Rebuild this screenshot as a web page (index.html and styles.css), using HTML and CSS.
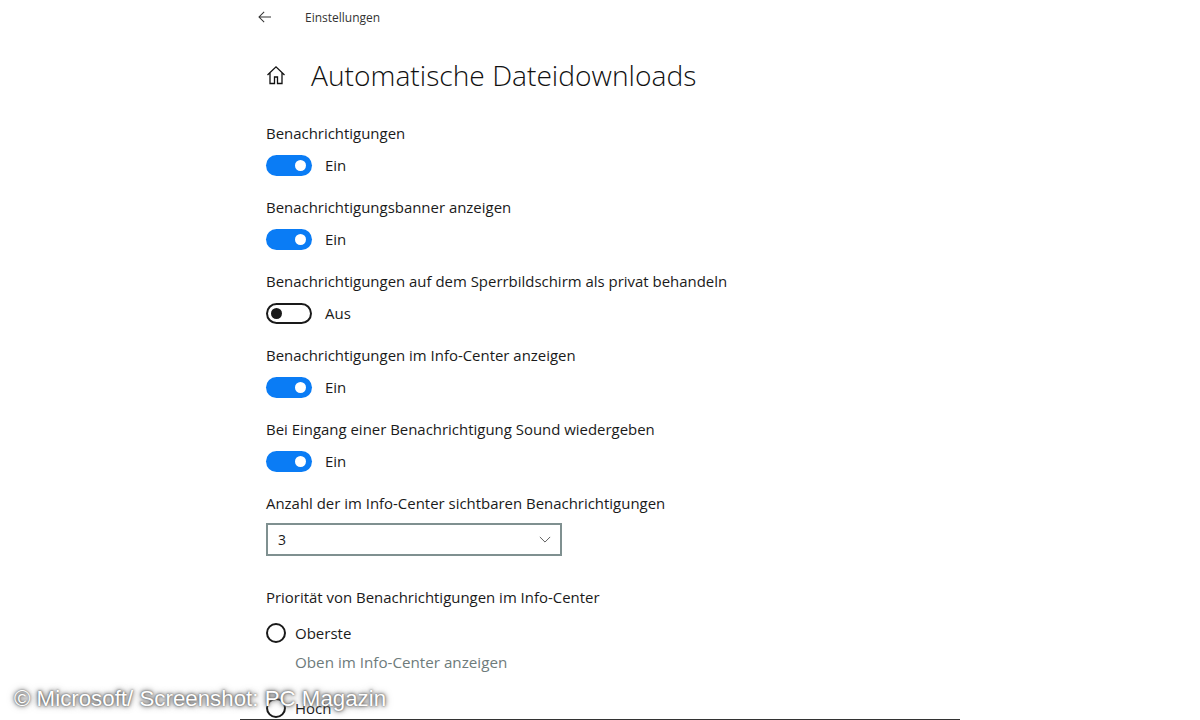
FILE: index.html
```html
<!DOCTYPE html>
<html lang="de">
<head>
<meta charset="utf-8">
<title>Einstellungen</title>
<link rel="stylesheet" href="styles.css">
</head>
<body>
<main class="panel">
  <header class="topbar">
    <svg class="back" viewBox="0 0 16 14" width="14" height="12"><path d="M7 1 1 7l6 6M1 7h14" fill="none" stroke="#333" stroke-width="1.200"/></svg>
    <span class="apptitle">Einstellungen</span>
  </header>
  <div class="titlerow">
    <svg class="home" viewBox="0 0 20 20" width="20" height="20"><path d="M1.500 10 10 1.800l8.500 8.200M4 8v10.500h4.500v-6.500h3v6.500H16V8" fill="none" stroke="#111" stroke-width="1.300"/></svg>
    <h1>Automatische Dateidownloads</h1>
  </div>
  <section class="setting">
    <div class="label">Benachrichtigungen</div>
    <div class="togglerow"><span class="toggle on"><i></i></span><span>Ein</span></div>
  </section>
  <section class="setting">
    <div class="label">Benachrichtigungsbanner anzeigen</div>
    <div class="togglerow"><span class="toggle on"><i></i></span><span>Ein</span></div>
  </section>
  <section class="setting">
    <div class="label">Benachrichtigungen auf dem Sperrbildschirm als privat behandeln</div>
    <div class="togglerow"><span class="toggle off"><i></i></span><span>Aus</span></div>
  </section>
  <section class="setting">
    <div class="label">Benachrichtigungen im Info-Center anzeigen</div>
    <div class="togglerow"><span class="toggle on"><i></i></span><span>Ein</span></div>
  </section>
  <section class="setting">
    <div class="label">Bei Eingang einer Benachrichtigung Sound wiedergeben</div>
    <div class="togglerow"><span class="toggle on"><i></i></span><span>Ein</span></div>
  </section>
  <section class="setting">
    <div class="label">Anzahl der im Info-Center sichtbaren Benachrichtigungen</div>
    <div class="select"><span>3</span><svg viewBox="0 0 14 8" width="12" height="7"><path d="M1 1l6 6 6-6" fill="none" stroke="#555" stroke-width="1.100"/></svg></div>
  </section>
  <section class="priority">
    <div class="label">Priorität von Benachrichtigungen im Info-Center</div>
    <div class="radio"><span class="circle"></span><span>Oberste</span></div>
    <div class="hint">Oben im Info-Center anzeigen</div>
    <div class="radio"><span class="circle"></span><span>Hoch</span></div>
  </section>
</main>
<div class="watermark">© Microsoft/ Screenshot: PC Magazin</div>
</body>
</html>
```
FILE: styles.css
```css
* { box-sizing: border-box; }
html, body { margin: 0; height: 720px; overflow: hidden; background: #fff; }
body { font-family: "Open Sans", "Noto Sans", sans-serif; color: #1a1a1a; font-size: 15px; }
.panel { width: 720px; height: 720px; margin: 0 auto; padding: 0 26px; border-bottom: 1px solid #333; overflow: hidden; }
.topbar { display: flex; align-items: center; height: 34px; font-size: 12px; color: #333; }
.back { margin-left: -8px; }
.apptitle { margin-left: 33px; }
.titlerow { display: flex; align-items: center; height: 44px; margin-top: 19px; }
.home { flex: none; }
h1 { margin: 0 0 0 25px; font-size: 28.2px; font-weight: 300; color: #111; line-height: 44px; }
.setting { height: 74px; }
.titlerow + .setting { margin-top: 25px; }
.label { height: 23px; line-height: 23px; font-size: 14.950px; }
.togglerow { display: flex; align-items: center; gap: 13px; height: 22px; margin-top: 9px; font-size: 15px; }
.toggle { display: flex; align-items: center; width: 46px; height: 21px; border-radius: 11px; padding: 0 6px; }
.toggle i { display: block; width: 11px; height: 11px; border-radius: 50%; }
.toggle.on { background: #0a7cf5; justify-content: flex-end; }
.toggle.on i { background: #fff; }
.toggle.off { border: 2px solid #1a1a1a; padding: 0 3px; }
.toggle.off i { background: #1a1a1a; }
.select { display: flex; align-items: center; justify-content: space-between; width: 296px; height: 33px; margin-top: 8px; padding: 0 9px 0 10px; border: 2px solid #7f9090; font-size: 14px; }
.priority { margin-top: 20px; }
.radio { display: flex; align-items: center; gap: 9px; height: 22px; margin-top: 13px; font-size: 15px; }
.circle { width: 20px; height: 20px; border: 2px solid #1a1a1a; border-radius: 50%; }
.hint { margin: 7px 0 0 29px; height: 22px; line-height: 22px; color: #6e7b7b; font-size: 15.200px; }
.hint + .radio { margin-top: 24px; }
.watermark { position: absolute; left: 14px; top: 686px; font-family: "Liberation Sans", Arial, sans-serif; font-size: 22.300px; color: #fff; white-space: nowrap; text-shadow: 0 0 2px #555, 0 0 4px #666, 0 0 7px #777; }
```
